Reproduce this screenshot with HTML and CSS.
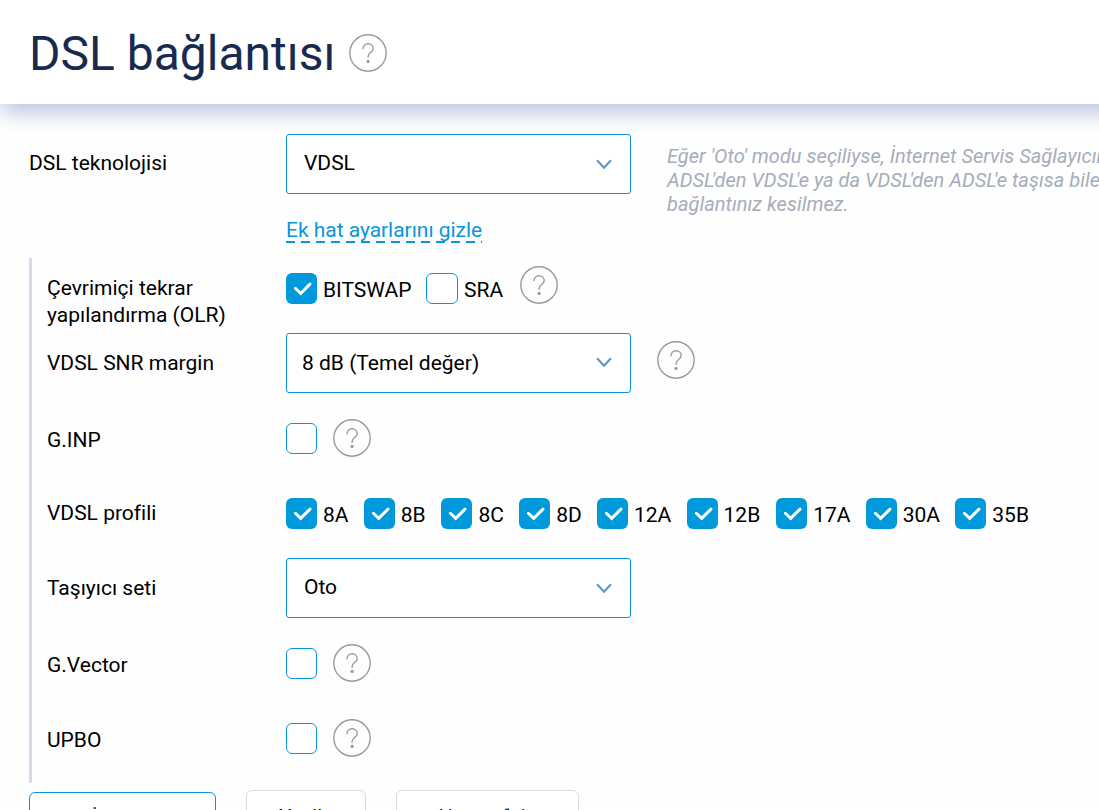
FILE: index.html
```html
<!DOCTYPE html>
<html lang="tr">
<head>
<meta charset="utf-8">
<title>DSL bağlantısı</title>
<link rel="stylesheet" href="styles.css">
</head>
<body>
<svg width="0" height="0" class="defs">
  <symbol id="help" viewBox="0 0 38 38"><g fill="none" stroke="#9a9a9a"><circle cx="19" cy="19" r="18.2" stroke-width="1.4"/><path d="M14 15.2C14 12 16.2 9.8 19.1 9.8C22.1 9.8 24.2 11.9 24.2 14.6C24.2 18.4 19.1 18.7 19.1 22.4V23.7" stroke-width="1.4"/></g><circle cx="19.1" cy="27.4" r="1.6" fill="#9a9a9a"/></symbol>
  <symbol id="check" viewBox="0 0 31 31"><path d="M9.4 15.2L14.7 20.4L24 11.1" fill="none" stroke="#fff" stroke-width="2.9" stroke-linecap="round"/></symbol>
  <symbol id="arrow" viewBox="0 0 16 11"><path d="M1 1.2L8 8.6L15 1.2" fill="none" stroke="#5795cb" stroke-width="2.1"/></symbol>
</svg>
<header class="header"><h1 class="title">DSL bağlantısı</h1><svg class="help"><use href="#help"/></svg></header>
<main class="content">
  <div class="row technology">
    <div class="label">DSL teknolojisi</div>
    <div class="select-column"><div class="select"><span>VDSL</span><svg class="arrow"><use href="#arrow"/></svg></div><a class="toggle">Ek hat ayarlarını gizle</a></div>
    <p class="hint">Eğer 'Oto' modu seçiliyse, İnternet Servis Sağlayıcınız<br>ADS<span class="tight">L</span>'den VDS<span class="tight">L</span>'e ya da VDS<span class="tight">L</span>'den ADS<span class="tight">L</span>'e taşısa bile<br>bağlantınız kesilmez.</p>
  </div>
  <section class="advanced">
    <div class="row olr"><div class="label">Çevrimiçi tekrar yapılandırma (OLR)</div><div class="options"><label class="option"><span class="box checked"><svg><use href="#check"/></svg></span>BITSWAP</label><label class="option sra"><span class="box wide"></span>SRA</label><svg class="help"><use href="#help"/></svg></div></div>
    <div class="row margin"><div class="label">VDSL SNR margin</div><div class="select default"><span>8 dB (Temel değer)</span><svg class="arrow"><use href="#arrow"/></svg></div><svg class="help"><use href="#help"/></svg></div>
    <div class="row single ginp"><div class="label">G.INP</div><span class="box"></span><svg class="help"><use href="#help"/></svg></div>
    <div class="row profile"><div class="label">VDSL profili</div><div class="profiles">
      <label class="option short"><span class="box checked"><svg><use href="#check"/></svg></span>8A</label>
      <label class="option short"><span class="box checked"><svg><use href="#check"/></svg></span>8B</label>
      <label class="option short"><span class="box checked"><svg><use href="#check"/></svg></span>8C</label>
      <label class="option short"><span class="box checked"><svg><use href="#check"/></svg></span>8D</label>
      <label class="option long"><span class="box checked"><svg><use href="#check"/></svg></span>12A</label>
      <label class="option long"><span class="box checked"><svg><use href="#check"/></svg></span>12B</label>
      <label class="option long"><span class="box checked"><svg><use href="#check"/></svg></span>17A</label>
      <label class="option long"><span class="box checked"><svg><use href="#check"/></svg></span>30A</label>
      <label class="option long"><span class="box checked"><svg><use href="#check"/></svg></span>35B</label>
    </div></div>
    <div class="row carrier"><div class="label">Taşıyıcı seti</div><div class="select"><span>Oto</span><svg class="arrow"><use href="#arrow"/></svg></div></div>
    <div class="row single vector"><div class="label">G.Vector</div><span class="box"></span><svg class="help"><use href="#help"/></svg></div>
    <div class="row single"><div class="label">UPBO</div><span class="box"></span><svg class="help"><use href="#help"/></svg></div>
  </section>
  <div class="buttons"><button class="button primary">İptal et</button><button class="button second">Yenile</button><button class="button third">Hattı sıfırla</button></div>
</main>
</body>
</html>
```
FILE: styles.css
```css
* { box-sizing: border-box; }
body { margin: 0; width: 1099px; height: 810px; overflow: hidden; background: #fefefe; color: #000; font-family: Roboto, sans-serif; font-size: 21px; line-height: 27px; }
.defs { display: none; }
svg { display: block; flex-shrink: 0; }
.header { display: flex; align-items: center; height: 104px; margin-right: -30px; padding: 2px 29px 0; background: #fff; box-shadow: 2px 8px 20px 0 #b9c0de; }
.title { margin: 2px 14px 0 0; color: #172b50; font-size: 48px; font-weight: 400; line-height: 58px; width: 306px; white-space: nowrap; }
.help { width: 38px; height: 38px; }
.content { padding: 30px 0 0 29px; }
.row { display: flex; align-items: flex-start; }
.technology { height: 124px; }
.label { flex: 0 0 239px; white-space: nowrap; }
.technology .label { flex-basis: 257px; padding-top: 16px; }
.select-column { width: 345px; }
.select { display: flex; flex-shrink: 0; justify-content: space-between; width: 345px; height: 60px; padding: 15px 18px 0 17px; border: 1px solid #0896db; border-radius: 3px; background: #fff; }
.default { padding-top: 16px; padding-left: 15px; }
.arrow { width: 16px; height: 11px; margin-top: 9px; }
.default .arrow { margin-top: 7px; }
.toggle { display: inline-block; height: 27px; margin-top: 22px; line-height: 29px; color: #0896db; letter-spacing: -0.03px; background: repeating-linear-gradient(90deg, #0896db 0 9px, transparent 9px 15px) 0 25px / 100% 2px no-repeat; }
.hint { margin: 10px 0 0 36px; color: #a6adba; font-size: 20px; letter-spacing: 0.03px; font-style: italic; line-height: 24px; white-space: nowrap; }
.tight { letter-spacing: -2.8px; }
.advanced { height: 525px; border-left: 3px solid #d8dbe7; padding-left: 15px; }
.olr { height: 75px; }
.olr .label { padding-top: 17px; white-space: normal; padding-right: 50px; }
.options, .profiles, .option { display: flex; }
.option { align-items: center; white-space: nowrap; line-height: 32px; gap: 6px; padding-top: 1px; height: 32px; }
.options { padding-top: 15px; }
.options .option:first-child { width: 140px; }
.sra { width: 94px; }
.options .help { margin-top: -7px; }
.box { flex: 0 0 31px; height: 31px; border: 1px solid #0896db; border-radius: 6px; background: #fff; }
.option .box { margin-top: -2px; }
.wide { flex-basis: 32px; }
.checked { background: #0099dc; border: 0; }
.checked svg { width: 31px; height: 31px; }
.margin { height: 90px; }
.margin .label { padding-top: 17px; }
.margin .help { margin: 8px 0 0 26px; }
.single { height: 75px; }
.single .help { margin: -4px 0 0 16px; }
.single .label { padding-top: 4px; }
.profile .label { padding-top: 2px; }
.profile { height: 60px; }
.short { width: 77.74px; }
.long { width: 89.6px; }
.carrier { height: 90px; }
.carrier .label { padding-top: 17px; }
.buttons { display: flex; gap: 30px; padding-top: 7px; }
.button { height: 54px; border: 1px solid #d8dbe7; border-radius: 6px; background: #fff; color: #172b50; padding: 0; font: 20px Roboto, sans-serif; }
.primary { width: 187px; height: 52px; margin-top: 2px; border-color: #0896db; }
.second { width: 120px; color: #000; }
.third { width: 183px; }
```
